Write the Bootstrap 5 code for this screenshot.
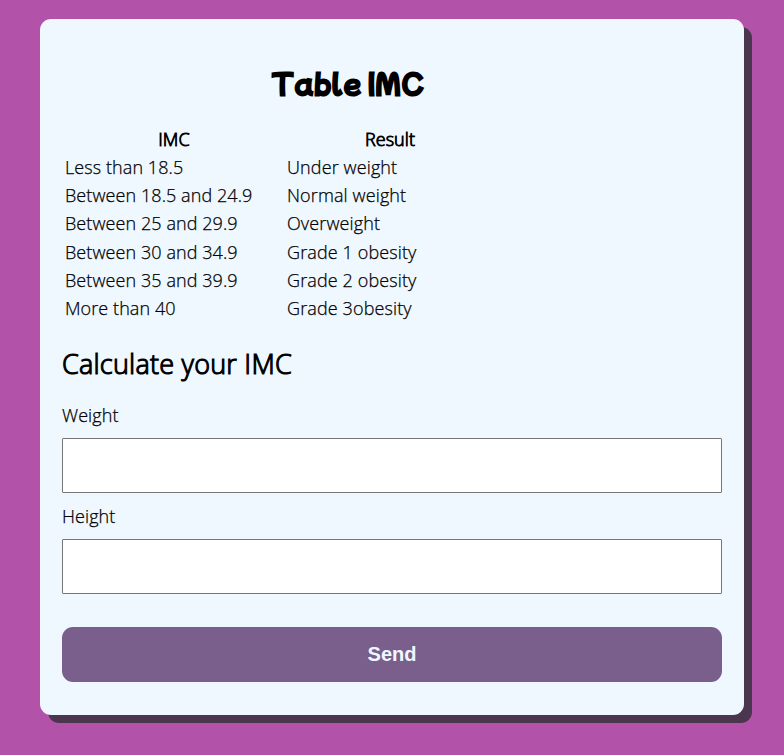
<!DOCTYPE html>
<html lang="en">
<head>
<meta charset="utf-8">
<meta name="viewport" content="width=device-width, initial-scale=1">
<title>Table IMC</title>
<link href="https://cdn.jsdelivr.net/npm/bootstrap@5.3.0/dist/css/bootstrap.min.css" rel="stylesheet">
<style>
body{background:#b252a8;color:#000;font:300 18px/27px "Open Sans",sans-serif;letter-spacing:.08px;-webkit-text-stroke:.25px #000;height:755px;overflow:hidden}
.panel{width:704px;height:696px;margin:19px 0 0 40px;padding:0 22px;background:#f0f8ff;border-radius:11px;box-shadow:8px 8px 0 #4a364f}
.imc-title{font:700 26.4px/40px "Mochiy Pop P One","Mochiy Pop One","Baloo 2","Open Sans",sans-serif;margin:0;padding:44px 0 21px 209px;white-space:nowrap;letter-spacing:0;-webkit-text-stroke:0}
.imc-table{border-collapse:separate;border-spacing:2px;width:434px;table-layout:fixed}
.imc-table td,.imc-table th{padding:1px;height:26.15px;line-height:24.15px;white-space:nowrap}
.imc-table td+td{letter-spacing:.12px}
.imc-table th{text-align:center;font-weight:300;-webkit-text-stroke:.85px #000}
.sub{font:300 27px/36px "Open Sans",sans-serif;-webkit-text-stroke:1.1px #000;letter-spacing:.23px;margin:23px 0 20px}
.field{height:55px;border:1px solid #767676;border-radius:1px;background:#fff;padding:0 10px;margin:9px 0 10px}
.send{height:55px;border:0;border-radius:11px;background:#7a5f8d;color:#f0f8ff;font:700 20px "Liberation Sans",Arial,sans-serif;letter-spacing:0;-webkit-text-stroke:0;margin-top:23px}
</style>
</head>
<body>
<main class="panel d-flex flex-column">
<h1 class="imc-title">Table IMC</h1>
<table class="imc-table">
<colgroup><col style="width:220px"><col></colgroup>
<thead><tr><th>IMC</th><th>Result</th></tr></thead>
<tbody>
<tr><td>Less than 18.5</td><td>Under weight</td></tr>
<tr><td>Between 18.5 and 24.9</td><td>Normal weight</td></tr>
<tr><td>Between 25 and 29.9</td><td>Overweight</td></tr>
<tr><td>Between 30 and 34.9</td><td>Grade 1 obesity</td></tr>
<tr><td>Between 35 and 39.9</td><td>Grade 2 obesity</td></tr>
<tr><td>More than 40</td><td>Grade 3obesity</td></tr>
</tbody>
</table>
<h2 class="sub">Calculate your IMC</h2>
<label for="weight">Weight</label>
<input id="weight" class="field w-100">
<label for="height">Height</label>
<input id="height" class="field w-100">
<button class="send w-100" type="button">Send</button>
</main>
<script src="https://cdn.jsdelivr.net/npm/bootstrap@5.3.0/dist/js/bootstrap.bundle.min.js"></script>
</body>
</html>
